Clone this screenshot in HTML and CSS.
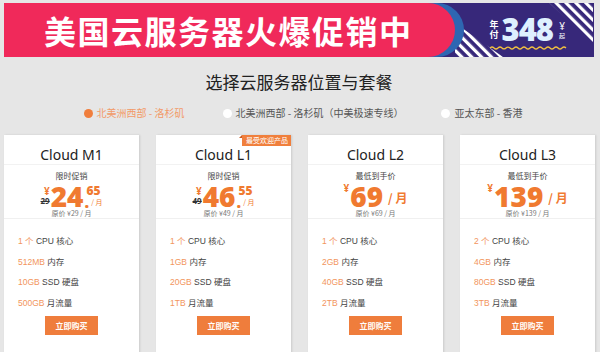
FILE: index.html
```html
<!DOCTYPE html>
<html lang="zh-CN">
<head>
    <meta charset="UTF-8">
    <title>美国云服务器</title>
    <link rel="stylesheet" href="styles.css">
</head>
<body>

    <!-- Banner -->
    <div class="banner">
        <div class="banner-title">美国云服务器火爆促销中</div>
        <div class="banner-side">
            <svg class="stripes" width="138" height="54" viewBox="0 0 138 54">
                <defs>
                    <pattern id="stripe" width="7" height="7" patternUnits="userSpaceOnUse" patternTransform="rotate(-45)">
                        <rect x="0" y="0" width="3.2" height="7" fill="#fff"/>
                    </pattern>
                </defs>
                <polygon points="94,0 138,0 138,40" fill="url(#stripe)"/>
                <polygon points="0,20 0,54 48,54" fill="url(#stripe)"/>
            </svg>
            <div class="deal">
                <div class="deal-row">
                    <span class="deal-label">年<br>付</span>
                    <span class="deal-num">348</span>
                    <span class="deal-yen">¥<small>起</small></span>
                </div>
                <svg class="wave" width="78" height="4" viewBox="0 0 78 4">
                    <path d="M0 2 Q2 0 4 2 T8 2 T12 2 T16 2 T20 2 T24 2 T28 2 T32 2 T36 2 T40 2 T44 2 T48 2 T52 2 T56 2 T60 2 T64 2 T68 2 T72 2 T76 2" fill="none" stroke="#f3c140" stroke-width="1.2"/>
                </svg>
            </div>
        </div>
    </div>

    <h2 class="section-title">选择云服务器位置与套餐</h2>

    <!-- Locations -->
    <div class="locations">
        <span class="loc active"><i class="dot"></i>北美洲西部 - 洛杉矶</span>
        <span class="loc"><i class="dot"></i>北美洲西部 - 洛杉矶（中美极速专线）</span>
        <span class="loc"><i class="dot"></i>亚太东部 - 香港</span>
    </div>

    <!-- Plans -->
    <div class="plans">
        <div class="plan">
            <div class="plan-name">Cloud M1</div>
            <div class="plan-price">
                <div class="price-tag">限时促销</div>
                <div class="price">
                    <span class="pre"><span class="yen">¥</span><s class="old">29</s></span>
                    <span class="big">24</span>
                    <span class="post"><span class="cents">65</span><span class="post-row"><b class="pt">.</b><span class="unit-sm">/ 月</span></span></span>
                </div>
                <div class="orig">原价 ¥29 / 月</div>
            </div>
            <ul class="specs">
                <li><em>1 个</em> CPU 核心</li>
                <li><em>512MB</em> 内存</li>
                <li><em>10GB</em> SSD 硬盘</li>
                <li><em>500GB</em> 月流量</li>
            </ul>
            <button class="buy-btn">立即购买</button>
        </div>

        <div class="plan">
            <span class="badge">最受欢迎产品</span>
            <div class="plan-name">Cloud L1</div>
            <div class="plan-price">
                <div class="price-tag">限时促销</div>
                <div class="price">
                    <span class="pre"><span class="yen">¥</span><s class="old">49</s></span>
                    <span class="big">46</span>
                    <span class="post"><span class="cents">55</span><span class="post-row"><b class="pt">.</b><span class="unit-sm">/ 月</span></span></span>
                </div>
                <div class="orig">原价 ¥49 / 月</div>
            </div>
            <ul class="specs">
                <li><em>1 个</em> CPU 核心</li>
                <li><em>1GB</em> 内存</li>
                <li><em>20GB</em> SSD 硬盘</li>
                <li><em>1TB</em> 月流量</li>
            </ul>
            <button class="buy-btn">立即购买</button>
        </div>

        <div class="plan">
            <div class="plan-name">Cloud L2</div>
            <div class="plan-price">
                <div class="price-tag">最低到手价</div>
                <div class="price">
                    <span class="yen top">¥</span>
                    <span class="big">69</span>
                    <span class="unit">/ 月</span>
                </div>
                <div class="orig">原价 ¥69 / 月</div>
            </div>
            <ul class="specs">
                <li><em>1 个</em> CPU 核心</li>
                <li><em>2GB</em> 内存</li>
                <li><em>40GB</em> SSD 硬盘</li>
                <li><em>2TB</em> 月流量</li>
            </ul>
            <button class="buy-btn">立即购买</button>
        </div>

        <div class="plan">
            <div class="plan-name">Cloud L3</div>
            <div class="plan-price">
                <div class="price-tag">最低到手价</div>
                <div class="price">
                    <span class="yen top">¥</span>
                    <span class="big">139</span>
                    <span class="unit">/ 月</span>
                </div>
                <div class="orig">原价 ¥139 / 月</div>
            </div>
            <ul class="specs">
                <li><em>2 个</em> CPU 核心</li>
                <li><em>4GB</em> 内存</li>
                <li><em>80GB</em> SSD 硬盘</li>
                <li><em>3TB</em> 月流量</li>
            </ul>
            <button class="buy-btn">立即购买</button>
        </div>
    </div>

</body>
</html>
```

FILE: styles.css
```css
body {
    font-family: 'Noto Sans', 'Noto Sans CJK SC', sans-serif;
    margin: 0;
    padding: 3px 6px 0 4px;
    background-color: #e6e6e6;
    color: #333;
    overflow: hidden;
}

/* Banner */
.banner {
    display: flex;
    height: 54px;
    background: #37287a;
    overflow: hidden;
}

.banner-title {
    flex: 0 0 451px;
    display: flex;
    align-items: center;
    padding-left: 40px;
    box-sizing: border-box;
    background: #f0295a;
    color: #fff;
    font-family: 'Noto Sans CJK SC', sans-serif;
    font-size: 32px;
    font-weight: 700;
    letter-spacing: 1.5px;
    border-radius: 0 27px 27px 0;
    box-shadow: 9px 0 0 0 #2e66b2;
    position: relative;
    z-index: 1;
}

.banner-side {
    flex: 1;
    position: relative;
    display: flex;
    align-items: center;
    justify-content: center;
}

.stripes {
    position: absolute;
    top: 0;
    left: 0;
}

.deal {
    position: relative;
    display: flex;
    flex-direction: column;
    align-items: flex-start;
    margin-left: 8px;
    margin-top: 4px;
}

.deal-row {
    display: flex;
    align-items: center;
    gap: 3px;
}

.deal-label {
    font-family: 'Noto Sans CJK SC', sans-serif;
    font-size: 9px;
    font-weight: 700;
    line-height: 10px;
    color: #fff;
}

.deal-num {
    font-family: 'Open Sans', sans-serif;
    font-size: 31px;
    font-weight: 800;
    line-height: 1;
    color: #def0ff;
    letter-spacing: -1px;
}

.deal-yen {
    display: flex;
    flex-direction: column;
    align-items: center;
    color: #fff;
    font-size: 10px;
    line-height: 12px;
    margin-left: 3px;
}

.deal-yen small {
    font-size: 6px;
    line-height: 8px;
}

.wave {
    display: block;
    margin-top: 1px;
}

/* Section heading */
.section-title {
    margin: 13px 0 0;
    text-align: center;
    font-family: 'Noto Sans CJK SC', sans-serif;
    font-size: 17px;
    font-weight: 400;
    line-height: 24px;
    color: #222;
}

.locations {
    display: flex;
    justify-content: center;
    gap: 38px;
    margin-top: 12px;
    padding-left: 8px;
    font-family: 'Noto Sans CJK SC', sans-serif;
    font-size: 10px;
    line-height: 14px;
    color: #555;
}

.loc {
    display: flex;
    align-items: center;
    gap: 4px;
}

.dot {
    width: 9px;
    height: 9px;
    border-radius: 50%;
    background: #fff;
}

.loc.active {
    color: #f29a68;
}

.loc.active .dot {
    background: #f07e3c;
}

/* Plans */
.plans {
    display: grid;
    grid-template-columns: repeat(4, 135px);
    gap: 17px;
    margin-top: 15px;
}

.plan {
    position: relative;
    background: #fff;
    height: 230px;
    box-shadow: 1px 0 2px rgba(0, 0, 0, 0.12);
    display: flex;
    flex-direction: column;
}

.badge {
    position: absolute;
    top: 0;
    right: 0;
    background: #f07f3c;
    color: #fff;
    font-family: 'Noto Sans CJK SC', sans-serif;
    font-size: 7px;
    line-height: 11px;
    padding: 0 3px 0 4px;
}

.badge::before {
    content: "";
    position: absolute;
    left: -3px;
    top: 0;
    border-right: 3px solid #c85a20;
    border-top: 3px solid transparent;
}

.plan-name {
    height: 30px;
    box-sizing: border-box;
    padding-top: 11px;
    text-align: center;
    font-size: 14px;
    line-height: 18px;
    color: #222;
    border-bottom: 1px solid #f2f2f2;
}

.plan-price {
    height: 54px;
    border-bottom: 1px solid #f0f0f0;
    text-align: center;
    padding-top: 5px;
    box-sizing: border-box;
}

.price-tag {
    font-family: 'Noto Sans CJK SC', sans-serif;
    font-size: 8px;
    line-height: 11px;
    color: #444;
}

.price {
    display: flex;
    justify-content: center;
    align-items: flex-end;
    height: 26px;
    color: #f07a30;
    font-family: 'Open Sans', sans-serif;
    font-weight: 800;
}

.pre {
    display: flex;
    flex-direction: column;
    align-items: flex-end;
    margin-right: 1px;
}

.yen {
    font-size: 10px;
    line-height: 10px;
    font-weight: 700;
}

.yen.top {
    align-self: flex-start;
    margin-top: 2px;
    margin-right: 1px;
}

.old {
    font-size: 8px;
    line-height: 9px;
    color: #333;
    font-weight: 700;
    margin-bottom: 2px;
}

.big {
    font-size: 28px;
    line-height: 22px;
}

.post {
    display: flex;
    flex-direction: column;
    margin-left: 1px;
}

.cents {
    font-size: 12px;
    line-height: 12px;
}

.post-row {
    display: flex;
    align-items: flex-end;
}

.pt {
    font-size: 16px;
    line-height: 10px;
}

.unit-sm {
    font-family: 'Noto Sans CJK SC', sans-serif;
    font-size: 7px;
    font-weight: 400;
    line-height: 9px;
    margin-left: 2px;
}

.unit {
    font-family: 'Noto Sans CJK SC', sans-serif;
    font-size: 12px;
    font-weight: 700;
    line-height: 16px;
    margin-left: 5px;
    margin-bottom: 1px;
}

.orig {
    font-family: 'Noto Sans CJK SC', sans-serif;
    font-size: 7px;
    line-height: 10px;
    color: #777;
    margin-top: 1px;
}

.specs {
    list-style: none;
    margin: 0;
    padding: 16px 0 0 14px;
    font-family: 'Liberation Sans', 'Noto Sans CJK SC', sans-serif;
    font-size: 8.5px;
    line-height: 12px;
    color: #444;
}

.specs li {
    margin-bottom: 8.7px;
}

.specs li:last-child {
    margin-bottom: 7px;
}

.specs em {
    font-style: normal;
    color: #f2955c;
}

.buy-btn {
    align-self: center;
    width: 53px;
    height: 19px;
    padding: 0;
    border: none;
    background: #ef7d3c;
    color: #fff;
    font-family: 'Noto Sans CJK SC', sans-serif;
    font-size: 8px;
    font-weight: 700;
    cursor: pointer;
}
```
